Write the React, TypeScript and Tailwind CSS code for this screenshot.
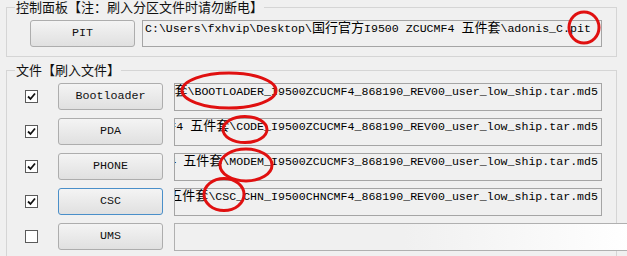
import React from 'react';

const PATH = 'C:\\Users\\fxhvip\\Desktop\\国行官方I9500 ZCUCMF4 五件套\\';

const rows = [
  { label: 'Bootloader', checked: true, file: 'BOOTLOADER_I9500ZCUCMF4_868190_REV00_user_low_ship.tar.md5' },
  { label: 'PDA', checked: true, file: 'CODE_I9500ZCUCMF4_868190_REV00_user_low_ship.tar.md5' },
  { label: 'PHONE', checked: true, file: 'MODEM_I9500ZCUCMF3_868190_REV00_user_low_ship.tar.md5' },
  { label: 'CSC', checked: true, file: 'CSC_CHN_I9500CHNCMF4_868190_REV00_user_low_ship.tar.md5', focused: true },
  { label: 'UMS', checked: false, file: '' },
];

// CJK runs get their own font; tight leading so they don't push the baseline down
const MixedText: React.FC<{ text: string }> = ({ text }) => (
  <>
    {text.split(/([\u3000-\u9fff\uff00-\uffef]+)/).map((part, i) =>
      /[\u3000-\u9fff\uff00-\uffef]/.test(part) ? (
        <span key={i} className="text-[13px] leading-[8px] font-['Noto_Sans_CJK_SC',sans-serif]">{part}</span>
      ) : (
        <span key={i}>{part}</span>
      )
    )}
  </>
);

const WinButton: React.FC<{ label: string; focused?: boolean }> = ({ label, focused }) => (
  <div
    className={`shrink-0 w-[105px] h-[27px] flex items-center justify-center rounded-[3px] border bg-linear-to-b from-[#f4f4f4] to-[#e0e0e0] text-[11.7px] text-[#111] ${
      focused ? 'border-[#4a8fc9]' : 'border-[#adadad]'
    }`}
  >
    {label}
  </div>
);

const CheckBox: React.FC<{ checked: boolean }> = ({ checked }) => (
  <div className="shrink-0 w-[13px] h-[13px] border border-[#5a5a5a] bg-white flex items-center justify-center">
    {checked && (
      <svg width="9" height="9" viewBox="0 0 9 9">
        <path d="M1 4.5 L3.5 7 L8 1.5" fill="none" stroke="#111" strokeWidth="1.8" />
      </svg>
    )}
  </div>
);

export default function App() {
  return (
    <div className="relative w-[627px] h-[256px] overflow-hidden bg-[#f0f0f0] font-['Liberation_Mono','Noto_Sans_CJK_SC',monospace] text-black">
      {/* Control panel */}
      <fieldset className="ml-[6px] w-[611px] min-w-0 border border-[#d5d5d5] pt-[6px] pb-[9px]">
        <legend className="ml-[8px] px-[1px] text-[13px] leading-[14px] font-['Noto_Sans_CJK_SC',sans-serif] text-[#111]">
          控制面板【注：刷入分区文件时请勿断电】
        </legend>
        <div className="flex items-start">
          <div className="ml-[23px]">
            <WinButton label="PIT" />
          </div>
          <div className="shrink-0 ml-[7px] w-[460px] h-[27px] border border-[#a5a5a5] pl-[2px] pt-[1px] text-[11.6px] leading-[14px] whitespace-nowrap overflow-hidden">
            <MixedText text={PATH + 'adonis_C.pit'} />
          </div>
        </div>
      </fieldset>

      {/* Files */}
      <fieldset className="ml-[6px] mt-[6px] w-[611px] min-w-0 border border-[#d5d5d5] pt-[6px] pb-[20px]">
        <legend className="ml-[8px] px-[1px] text-[13px] leading-[14px] font-['Noto_Sans_CJK_SC',sans-serif] text-[#111]">
          文件【刷入文件】
        </legend>
        <div className="flex flex-col gap-[8px]">
          {rows.map(row => (
            <div key={row.label} className="flex items-center h-[27px]">
              <div className="ml-[18px]">
                <CheckBox checked={row.checked} />
              </div>
              <div className="ml-[20px]">
                <WinButton label={row.label} focused={row.focused} />
              </div>
              {row.file ? (
                <div className="shrink-0 ml-[11px] w-[428px] h-[28px] border border-[#a5a5a5] pr-[3px] pt-[1px] flex justify-end items-start text-[11.6px] leading-[14px] whitespace-nowrap overflow-hidden">
                  <span className="shrink-0">
                    <MixedText text={PATH + row.file} />
                  </span>
                </div>
              ) : (
                <div className="shrink-0 ml-[11px] w-[460px] h-[28px] border border-[#b0b0b0] bg-linear-to-r from-[#f0f0f0] via-[#f0f0f0] to-white" />
              )}
            </div>
          ))}
        </div>
      </fieldset>

      {/* Red annotation circles */}
      <svg className="absolute inset-0 pointer-events-none" width="627" height="256">
        <g fill="none" stroke="#e01010" strokeWidth="3">
          <ellipse cx="584" cy="27.5" rx="15" ry="15.5" />
          <ellipse cx="229" cy="90.5" rx="47" ry="17.5" />
          <ellipse cx="245" cy="129.5" rx="22" ry="13" />
          <ellipse cx="246" cy="165" rx="26" ry="16" />
          <ellipse cx="224" cy="194.5" rx="20" ry="16" />
        </g>
      </svg>
    </div>
  );
}
